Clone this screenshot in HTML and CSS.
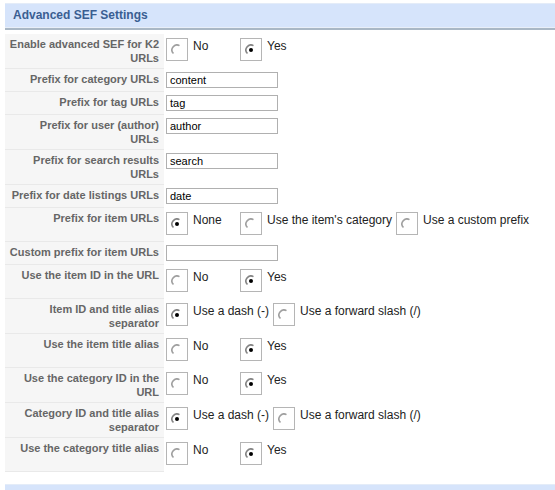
FILE: index.html
```html
<!DOCTYPE html>
<html>
<head>
<meta charset="utf-8">
<title>Advanced SEF Settings</title>
<link rel="stylesheet" href="styles.css">
</head>
<body>
<div class="page">
  <div class="panel">
    <h3 class="panel-title">Advanced SEF Settings</h3>
    <div class="params">
      <div class="row">
        <div class="key">Enable advanced SEF for K2<br>URLs</div>
        <div class="val radio-val">
          <label class="opt"><span class="rb"><svg viewBox="0 0 12 12"><path class="arc" d="M8.5 1.67A5 5 0 0 0 2.46 9.54"/></svg></span><span class="txt">No</span></label>
          <label class="opt"><span class="rb"><svg viewBox="0 0 12 12"><path class="arc on" d="M8.5 1.67A5 5 0 0 0 2.46 9.54"/><circle class="dot" cx="6" cy="6" r="2"/></svg></span><span class="txt">Yes</span></label>
        </div>
      </div>
      <div class="row">
        <div class="key">Prefix for category URLs</div>
        <div class="val"><span class="field">content</span></div>
      </div>
      <div class="row">
        <div class="key">Prefix for tag URLs</div>
        <div class="val"><span class="field">tag</span></div>
      </div>
      <div class="row">
        <div class="key">Prefix for user (author)<br>URLs</div>
        <div class="val"><span class="field">author</span></div>
      </div>
      <div class="row">
        <div class="key">Prefix for search results<br>URLs</div>
        <div class="val"><span class="field">search</span></div>
      </div>
      <div class="row">
        <div class="key">Prefix for date listings URLs</div>
        <div class="val"><span class="field">date</span></div>
      </div>
      <div class="row">
        <div class="key">Prefix for item URLs</div>
        <div class="val radio-val">
          <label class="opt"><span class="rb"><svg viewBox="0 0 12 12"><path class="arc on" d="M8.5 1.67A5 5 0 0 0 2.46 9.54"/><circle class="dot" cx="6" cy="6" r="2"/></svg></span><span class="txt">None</span></label>
          <label class="opt"><span class="rb"><svg viewBox="0 0 12 12"><path class="arc" d="M8.5 1.67A5 5 0 0 0 2.46 9.54"/></svg></span><span class="txt">Use the item's category</span></label>
          <label class="opt"><span class="rb"><svg viewBox="0 0 12 12"><path class="arc" d="M8.5 1.67A5 5 0 0 0 2.46 9.54"/></svg></span><span class="txt">Use a custom prefix</span></label>
        </div>
      </div>
      <div class="row">
        <div class="key">Custom prefix for item URLs</div>
        <div class="val"><span class="field"></span></div>
      </div>
      <div class="row">
        <div class="key">Use the item ID in the URL</div>
        <div class="val radio-val">
          <label class="opt"><span class="rb"><svg viewBox="0 0 12 12"><path class="arc" d="M8.5 1.67A5 5 0 0 0 2.46 9.54"/></svg></span><span class="txt">No</span></label>
          <label class="opt"><span class="rb"><svg viewBox="0 0 12 12"><path class="arc on" d="M8.5 1.67A5 5 0 0 0 2.46 9.54"/><circle class="dot" cx="6" cy="6" r="2"/></svg></span><span class="txt">Yes</span></label>
        </div>
      </div>
      <div class="row">
        <div class="key">Item ID and title alias<br>separator</div>
        <div class="val radio-val">
          <label class="opt"><span class="rb"><svg viewBox="0 0 12 12"><path class="arc on" d="M8.5 1.67A5 5 0 0 0 2.46 9.54"/><circle class="dot" cx="6" cy="6" r="2"/></svg></span><span class="txt">Use a dash (-)</span></label>
          <label class="opt"><span class="rb"><svg viewBox="0 0 12 12"><path class="arc" d="M8.5 1.67A5 5 0 0 0 2.46 9.54"/></svg></span><span class="txt">Use a forward slash (/)</span></label>
        </div>
      </div>
      <div class="row">
        <div class="key">Use the item title alias</div>
        <div class="val radio-val">
          <label class="opt"><span class="rb"><svg viewBox="0 0 12 12"><path class="arc" d="M8.5 1.67A5 5 0 0 0 2.46 9.54"/></svg></span><span class="txt">No</span></label>
          <label class="opt"><span class="rb"><svg viewBox="0 0 12 12"><path class="arc on" d="M8.5 1.67A5 5 0 0 0 2.46 9.54"/><circle class="dot" cx="6" cy="6" r="2"/></svg></span><span class="txt">Yes</span></label>
        </div>
      </div>
      <div class="row">
        <div class="key">Use the category ID in the<br>URL</div>
        <div class="val radio-val">
          <label class="opt"><span class="rb"><svg viewBox="0 0 12 12"><path class="arc" d="M8.5 1.67A5 5 0 0 0 2.46 9.54"/></svg></span><span class="txt">No</span></label>
          <label class="opt"><span class="rb"><svg viewBox="0 0 12 12"><path class="arc on" d="M8.5 1.67A5 5 0 0 0 2.46 9.54"/><circle class="dot" cx="6" cy="6" r="2"/></svg></span><span class="txt">Yes</span></label>
        </div>
      </div>
      <div class="row">
        <div class="key">Category ID and title alias<br>separator</div>
        <div class="val radio-val">
          <label class="opt"><span class="rb"><svg viewBox="0 0 12 12"><path class="arc on" d="M8.5 1.67A5 5 0 0 0 2.46 9.54"/><circle class="dot" cx="6" cy="6" r="2"/></svg></span><span class="txt">Use a dash (-)</span></label>
          <label class="opt"><span class="rb"><svg viewBox="0 0 12 12"><path class="arc" d="M8.5 1.67A5 5 0 0 0 2.46 9.54"/></svg></span><span class="txt">Use a forward slash (/)</span></label>
        </div>
      </div>
      <div class="row">
        <div class="key">Use the category title alias</div>
        <div class="val radio-val">
          <label class="opt"><span class="rb"><svg viewBox="0 0 12 12"><path class="arc" d="M8.5 1.67A5 5 0 0 0 2.46 9.54"/></svg></span><span class="txt">No</span></label>
          <label class="opt"><span class="rb"><svg viewBox="0 0 12 12"><path class="arc on" d="M8.5 1.67A5 5 0 0 0 2.46 9.54"/><circle class="dot" cx="6" cy="6" r="2"/></svg></span><span class="txt">Yes</span></label>
        </div>
      </div>
    </div>
  </div>
  <div class="panel next">
    <h3 class="panel-title"></h3>
  </div>
</div>
</body>
</html>
```

FILE: styles.css
```css
html, body {
  margin: 0;
  padding: 0;
  background: #ffffff;
}
body {
  font-family: "Liberation Sans", Arial, sans-serif;
  color: #333333;
}
.page {
  padding: 3px 0 0 5px;
}
.panel-title {
  margin: 0;
  height: 23px;
  line-height: 23px;
  border-top: 1px solid #e4ecf8;
  border-bottom: 1px solid #e8eef8;
  background: #d6e4fb;
  box-shadow: 0 2px 0 #a9b7c5;
  font-size: 12px;
  font-weight: bold;
  color: #3a5e92;
  padding-left: 8px;
}
.params {
  margin-top: 6px;
}
.row {
  display: grid;
  grid-template-columns: 159px 1fr;
}
.key {
  background: #f6f6f6;
  border-bottom: 1px solid #e9e9e9;
  padding: 3px 5px 3px 2px;
  text-align: right;
  font-size: 11px;
  font-weight: bold;
  color: #666666;
  line-height: 14px;
  white-space: nowrap;
}
.val {
  padding: 3px 0 4px 2px;
  display: flex;
  align-items: flex-start;
}
.radio-val {
  padding-top: 4px;
  padding-bottom: 7px;
}
.field {
  display: block;
  box-sizing: border-box;
  width: 112px;
  height: 16px;
  border: 1px solid #b0b0b0;
  padding: 0 3px;
  font-size: 11px;
  line-height: 14px;
  color: #000000;
  background: #ffffff;
}
.opt {
  display: flex;
  align-items: flex-start;
  margin-right: 4px;
}
.rb {
  box-sizing: border-box;
  width: 22px;
  height: 23px;
  border: 1px solid #b5b5b5;
  display: flex;
  align-items: center;
  justify-content: center;
  background: #ffffff;
}
.rb svg {
  width: 12px;
  height: 12px;
  display: block;
}
.arc {
  fill: none;
  stroke: #a0a0a0;
  stroke-width: 1.6;
}
.arc.on {
  stroke: #858585;
}
.dot {
  fill: #000000;
}
.txt {
  min-width: 43px;
  padding-left: 5px;
  padding-top: 1px;
  font-size: 12px;
  line-height: 14px;
  color: #222222;
}
.next {
  margin-top: 12px;
}
.next .panel-title {
  box-shadow: none;
}
```
